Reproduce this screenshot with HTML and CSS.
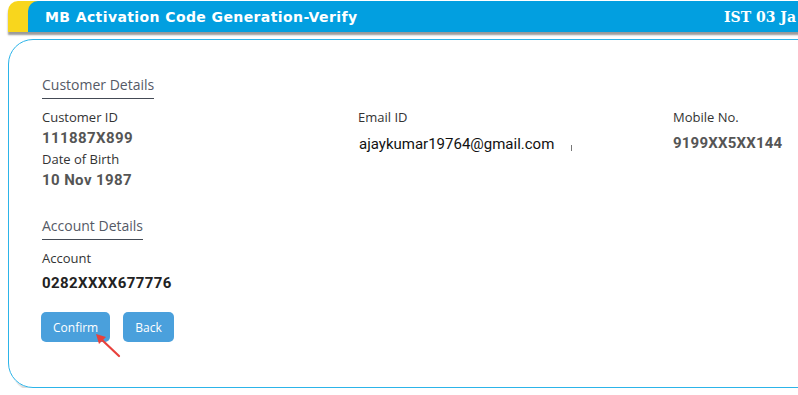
FILE: index.html
```html
<!DOCTYPE html>
<html lang="en">
<head>
  <meta charset="UTF-8">
  <title>MB Activation Code Generation-Verify</title>
  <link rel="stylesheet" href="styles.css">
</head>
<body>
  <div class="page">
    <!-- TITLE BAR -->
    <div class="title-bar">
      <div class="title-inner">
        <span class="title-text">MB Activation Code Generation-Verify</span>
        <span class="title-date">IST 03 Ja</span>
      </div>
    </div>

    <!-- DETAILS CARD -->
    <div class="card">
      <div class="section-header">Customer Details</div>
      <div class="detail-grid">
        <div class="detail-col">
          <div class="label">Customer ID</div>
          <div class="value">111887X899</div>
          <div class="label">Date of Birth</div>
          <div class="value">10 Nov 1987</div>
        </div>
        <div class="detail-col">
          <div class="label">Email ID</div>
          <div class="email">ajaykumar19764@gmail.com<span class="caret"></span></div>
        </div>
        <div class="detail-col">
          <div class="label">Mobile No.</div>
          <div class="value mobile">9199XX5XX144</div>
        </div>
      </div>

      <div class="section-header account-header">Account Details</div>
      <div class="label">Account</div>
      <div class="value account">0282XXXX677776</div>

      <div class="actions">
        <button class="btn">Confirm</button>
        <button class="btn">Back</button>
        <svg class="pointer" width="30" height="28" viewBox="0 0 30 28">
          <line x1="27" y1="26" x2="9" y2="9" stroke="#e8413c" stroke-width="2.2" stroke-linecap="round"/>
          <path d="M4 4 L14 7 L7 14 Z" fill="#e8413c"/>
        </svg>
      </div>
    </div>
  </div>
</body>
</html>
```
FILE: styles.css
```css
html, body {
  margin: 0;
  padding: 0;
  overflow: hidden;
  background: #fff;
}

.page {
  width: 1000px;
  padding: 1px 0 0 8px;
}

/* TITLE BAR */
.title-bar {
  background: #f8d61d;
  border-top-left-radius: 10px;
  padding-left: 20px;
  box-shadow: 0 3px 2px #9a9a9a;
}

.title-inner {
  background: #029fe0;
  border-top-left-radius: 10px;
  height: 31px;
  display: flex;
  align-items: center;
  padding-left: 17px;
}

.title-text {
  font-family: "DejaVu Sans", Verdana, sans-serif;
  font-weight: bold;
  font-size: 14px;
  letter-spacing: 0.4px;
  color: #fff;
  width: 679px;
}

.title-date {
  font-family: "DejaVu Serif", serif;
  font-weight: bold;
  font-size: 14px;
  color: #fff;
  white-space: nowrap;
}

/* CARD */
.card {
  margin-top: 7px;
  height: 312px;
  border: 1px solid #2cb4e9;
  border-radius: 25px 0 0 25px;
  box-shadow: 3px 4px 1px #dcdcdc;
  padding: 35px 0 0 33px;
  position: relative;
}

.section-header {
  display: inline-block;
  font-family: "Open Sans", sans-serif;
  font-size: 14px;
  color: #555a66;
  padding-bottom: 4px;
  border-bottom: 1px solid #444a55;
  margin-bottom: 9px;
}

.account-header {
  margin-top: 24px;
}

.detail-grid {
  display: grid;
  grid-template-columns: 316px 315px 200px;
}

.label {
  font-family: "Open Sans", sans-serif;
  font-size: 13px;
  color: #333;
  line-height: 18px;
}

.value {
  font-family: Roboto, sans-serif;
  font-weight: bold;
  font-size: 15px;
  color: #555;
  letter-spacing: 0.4px;
  line-height: 23px;
  padding-top: 1px;
}

.email {
  font-family: Roboto, sans-serif;
  font-size: 15px;
  color: #111;
  line-height: 26px;
  margin: 5px 0 0 1px;
}

.caret {
  display: inline-block;
  width: 1px;
  height: 6px;
  background: #777;
  margin-left: 17px;
  vertical-align: -2px;
}

.mobile {
  margin-top: 5px;
  letter-spacing: 0.2px;
}

.account {
  color: #222;
  margin-top: 4px;
}

/* BUTTONS */
.actions {
  display: flex;
  gap: 13px;
  margin: 17px 0 0 -1px;
  position: relative;
}

.btn {
  background: #4aa0dc;
  color: #fff;
  border: none;
  border-radius: 5px;
  height: 30px;
  padding: 0 12px;
  font-family: "Open Sans", sans-serif;
  font-size: 12px;
}

.pointer {
  position: absolute;
  left: 51px;
  top: 18px;
}
```
